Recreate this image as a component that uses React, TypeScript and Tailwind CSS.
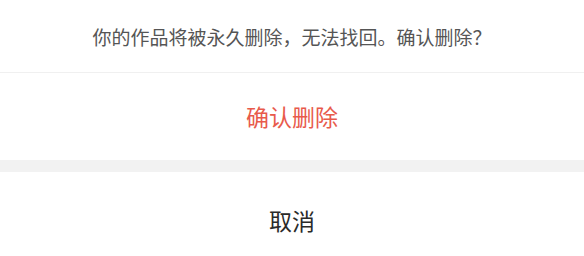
import React from 'react';

const App: React.FC = () => {
  return (
    <div
      className="w-[584px] h-[256px] overflow-hidden bg-white"
      style={{ fontFamily: '"Noto Sans CJK SC", "Noto Sans", sans-serif' }}
    >
      <div className="h-[72px] flex items-center justify-center border-b border-[#f0f0f0] box-content">
        <p className="text-[19px] leading-none text-[#555555]">
          你的作品将被永久删除，无法找回。确认删除？
        </p>
      </div>
      <button className="w-full h-[87px] flex items-center justify-center text-[23px] leading-none text-[#e85a4b]">
        确认删除
      </button>
      <div className="h-[12px] bg-[#f2f2f2]" />
      <button className="w-full h-[96px] flex items-center justify-center text-[23px] leading-none text-[#2a2a2a]">
        取消
      </button>
    </div>
  );
};

export default App;
